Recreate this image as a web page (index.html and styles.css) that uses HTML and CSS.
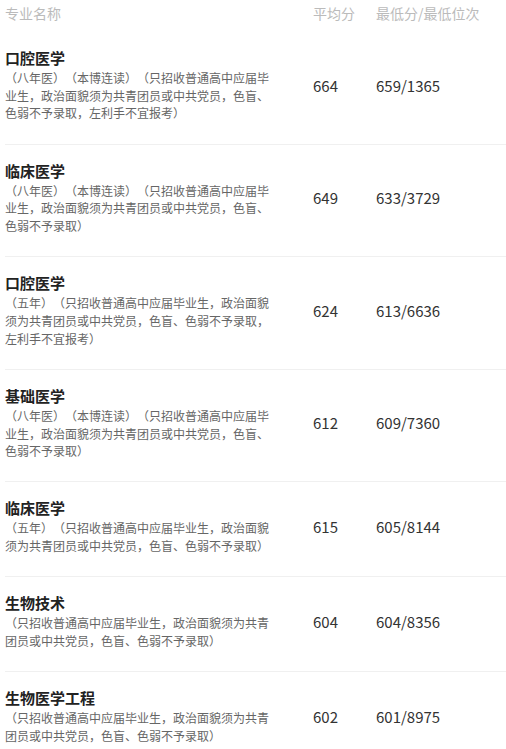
FILE: index.html
```html
<!DOCTYPE html>
<html lang="zh-CN">
<head>
<meta charset="utf-8">
<title>专业录取分数</title>
<link rel="stylesheet" href="styles.css">
</head>
<body>
<div class="table">
  <div class="head">
    <div class="c1">专业名称</div>
    <div class="c2">平均分</div>
    <div class="c3">最低分/最低位次</div>
  </div>
  <div class="row">
    <div class="c1"><div class="name">口腔医学</div><div class="desc">（八年医）（本博连读）（只招收普通高中应届毕业生，政治面貌须为共青团员或中共党员，色盲、色弱不予录取，左利手不宜报考）</div></div>
    <div class="c2">664</div>
    <div class="c3">659/1365</div>
  </div>
  <div class="row">
    <div class="c1"><div class="name">临床医学</div><div class="desc">（八年医）（本博连读）（只招收普通高中应届毕业生，政治面貌须为共青团员或中共党员，色盲、色弱不予录取）</div></div>
    <div class="c2">649</div>
    <div class="c3">633/3729</div>
  </div>
  <div class="row">
    <div class="c1"><div class="name">口腔医学</div><div class="desc">（五年）（只招收普通高中应届毕业生，政治面貌须为共青团员或中共党员，色盲、色弱不予录取，左利手不宜报考）</div></div>
    <div class="c2">624</div>
    <div class="c3">613/6636</div>
  </div>
  <div class="row">
    <div class="c1"><div class="name">基础医学</div><div class="desc">（八年医）（本博连读）（只招收普通高中应届毕业生，政治面貌须为共青团员或中共党员，色盲、色弱不予录取）</div></div>
    <div class="c2">612</div>
    <div class="c3">609/7360</div>
  </div>
  <div class="row">
    <div class="c1"><div class="name">临床医学</div><div class="desc">（五年）（只招收普通高中应届毕业生，政治面貌须为共青团员或中共党员，色盲、色弱不予录取）</div></div>
    <div class="c2">615</div>
    <div class="c3">605/8144</div>
  </div>
  <div class="row">
    <div class="c1"><div class="name">生物技术</div><div class="desc">（只招收普通高中应届毕业生，政治面貌须为共青团员或中共党员，色盲、色弱不予录取）</div></div>
    <div class="c2">604</div>
    <div class="c3">604/8356</div>
  </div>
  <div class="row">
    <div class="c1"><div class="name">生物医学工程</div><div class="desc">（只招收普通高中应届毕业生，政治面貌须为共青团员或中共党员，色盲、色弱不予录取）</div></div>
    <div class="c2">602</div>
    <div class="c3">601/8975</div>
  </div>
</div>
</body>
</html>
```
FILE: styles.css
```css
html, body {
  margin: 0;
  padding: 0;
  background: #fff;
}
body {
  font-family: "Noto Sans CJK SC", "Microsoft YaHei", sans-serif;
  color: #333;
  overflow: hidden;
  text-spacing-trim: space-all;
}
.table {
  padding-left: 5px;
}
.head,
.row {
  display: grid;
  grid-template-columns: 308px 63px 1fr;
}
.head {
  font-size: 14px;
  line-height: 22px;
  color: #bbb;
  padding: 2px 0 8px;
}
.row {
  align-items: center;
  border-bottom: 1px solid #f0f0f0;
  padding: 16px 0 21.5px;
}
.name {
  font-size: 15px;
  line-height: 20px;
  font-weight: bold;
  color: #222;
}
.desc {
  margin-top: 1px;
  width: 270px;
  font-size: 12px;
  line-height: 17.7px;
  color: #666;
  text-spacing-trim: space-all;
}
.row .c2,
.row .c3 {
  font-size: 15px;
  color: #333;
}
```
